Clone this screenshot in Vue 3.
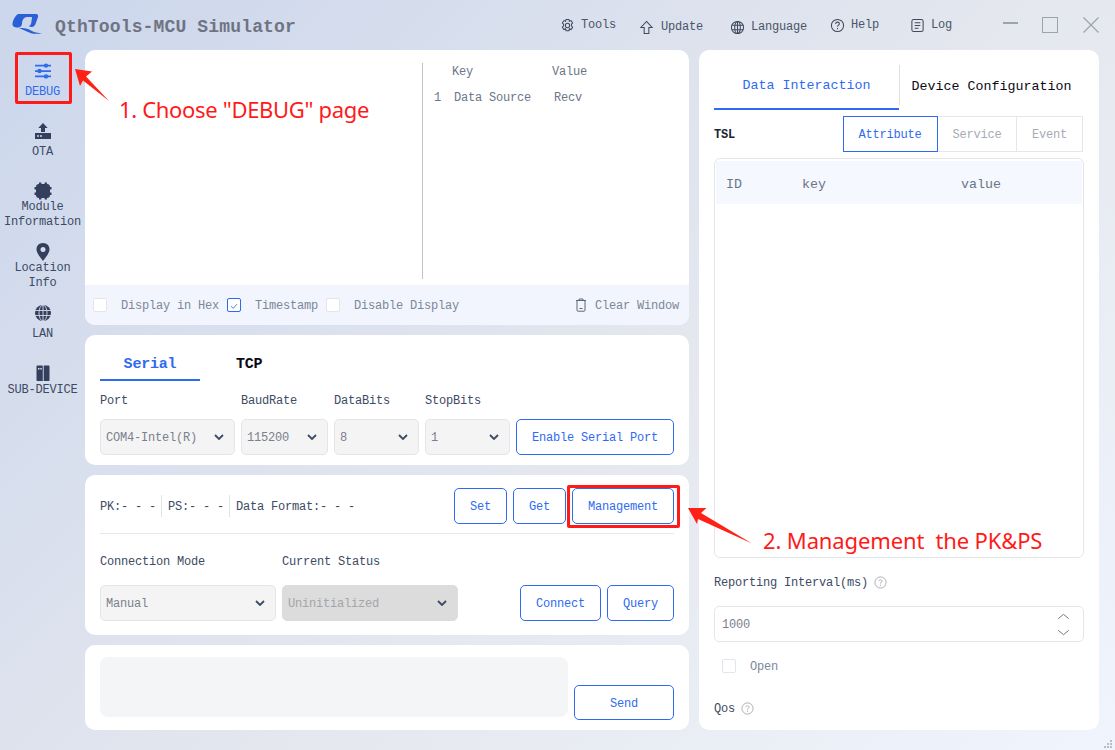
<script setup>
const navItems = [
  { label: 'Tools', icon: 'gear', cls: 'n1' },
  { label: 'Update', icon: 'up', cls: 'n2' },
  { label: 'Language', icon: 'globe', cls: 'n3' },
  { label: 'Help', icon: 'help', cls: 'n4' },
  { label: 'Log', icon: 'log', cls: 'n5' },
]
</script>

<template>
  <div class="window">
    <header class="topbar">
      <svg class="logo" viewBox="0 0 30 20" width="30" height="20">
        <path fill="#2a5fd6" d="M6 0H24C26 0 26.500 1.500 26 3L23.500 10C22.500 13 20 13.500 17 12.500L19 10 20 4C20 3.200 19.500 3 19 3H15C12 3 10 6 10 10 9.500 12 8.500 13.500 6 13.500 2 13.500 0 12 .5 9.500 1 6 3 2 6 0Z"/>
        <path fill="#2a5fd6" d="M7 14C12 14 16 14.500 19 16.500 22 18.500 26 19 30 19 25 20.500 20 20 16 18 13 16.500 10 15.500 7 14Z"/>
      </svg>
      <div class="title">QthTools-MCU Simulator</div>
      <nav class="nav">
        <div v-for="n in navItems" :key="n.label" class="nav-item" :class="n.cls">
          <svg viewBox="0 0 16 16" width="15" height="15" fill="none" stroke="#3f4a5c" stroke-width="1.100">
            <template v-if="n.icon === 'gear'">
              <path d="M6.500 1.500h3l.5 2 1.800-.8 1.700 2.500-1.300 1.500v1.600l1.300 1.500-1.700 2.500-1.800-.8-.5 2h-3l-.5-2-1.800.8-1.700-2.500 1.300-1.500V6.700L2.500 5.200l1.700-2.500 1.800.8Z"/>
              <circle cx="8" cy="8" r="2.300"/>
            </template>
            <path v-else-if="n.icon === 'up'" d="M8 1.500l6 6.500h-3.500v6.500h-5V8H2Z"/>
            <template v-else-if="n.icon === 'globe'">
              <circle cx="8" cy="8" r="6.500"/>
              <ellipse cx="8" cy="8" rx="3" ry="6.500"/>
              <path d="M8 1.500v13M2 5.500h12M2 10.500h12"/>
            </template>
            <template v-else-if="n.icon === 'help'">
              <circle cx="8" cy="8" r="6.500"/>
              <path d="M6 6.300c0-1.200 1-1.900 2-1.900s2 .7 2 1.800c0 1.500-2 1.500-2 3.200M8 10.700v1.300"/>
            </template>
            <template v-else>
              <rect x="2" y="1.500" width="12" height="13" rx="2"/>
              <path d="M5 5h6M5 8h6M5 11h4"/>
            </template>
          </svg>
          <span>{{ n.label }}</span>
        </div>
      </nav>
      <div class="winbtns">
        <span class="win-min"></span>
        <span class="win-max"></span>
        <svg class="win-close" viewBox="0 0 16 16" width="16" height="16"><path d="M.5.500l15 15M15.500.500l-15 15" stroke="#9aa3b0" stroke-width="1.200" fill="none"/></svg>
      </div>
    </header>

    <div class="body">
      <aside class="sidebar">
        <div class="side-item active">
          <svg viewBox="0 0 18 18" width="18" height="18" fill="#2f6bf0">
            <path d="M1 2.800h16v1.700H1ZM1 8.200h16v1.700H1ZM1 13.500h16v1.700H1Z"/>
            <circle cx="12" cy="3.600" r="2.200"/><circle cx="5.500" cy="9" r="2.200"/><circle cx="12" cy="14.400" r="2.200"/>
          </svg>
          <span class="side-label">DEBUG</span>
        </div>
        <div class="side-item">
          <svg viewBox="0 0 18 18" width="18" height="18" fill="#333f5c">
            <path d="M9 1l4.700 5H11v4H7V6H4.300ZM1 11h16v6H1Z"/>
            <rect x="3" y="13.300" width="2" height="1.400" fill="#d5dcea"/><rect x="6" y="13.300" width="2" height="1.400" fill="#d5dcea"/>
          </svg>
          <span class="side-label">OTA</span>
        </div>
        <div class="side-item">
          <svg viewBox="0 0 18 18" width="18" height="18" fill="#333f5c">
            <rect x="2" y="2" width="14" height="14" rx="3"/>
            <path d="M5 .500h2.400v3H5ZM10.600.500H13v3h-2.400ZM5 14.500h2.400v3H5ZM10.600 14.500H13v3h-2.400ZM.5 5h3v2.400h-3ZM.5 10.600h3V13h-3ZM14.500 5h3v2.400h-3ZM14.500 10.600h3V13h-3Z"/>
          </svg>
          <span class="side-label tight">Module<br>Information</span>
        </div>
        <div class="side-item">
          <svg viewBox="0 0 18 18" width="18" height="18">
            <path fill="#333f5c" d="M9 0c3.900 0 6.500 2.800 6.500 6.300 0 4-3.800 8-6.500 11.700C6.300 14.300 2.500 10.300 2.500 6.300 2.500 2.800 5.100 0 9 0Z"/>
            <circle cx="9" cy="6.500" r="2.500" fill="#d5dcea"/>
          </svg>
          <span class="side-label mid">Location<br>Info</span>
        </div>
        <div class="side-item">
          <svg viewBox="0 0 18 18" width="18" height="18">
            <circle cx="9" cy="9" r="8" fill="#333f5c"/>
            <path d="M9 1v16M1 6.500h16M1 11.500h16" stroke="#d5dcea" stroke-width=".9" fill="none"/>
            <ellipse cx="9" cy="9" rx="4" ry="8" fill="none" stroke="#d5dcea" stroke-width=".9"/>
          </svg>
          <span class="side-label">LAN</span>
        </div>
        <div class="side-item">
          <svg viewBox="0 0 18 18" width="18" height="18" fill="#333f5c">
            <path d="M2.500 1.500c0-.6.400-1 1-1h4.300c.6 0 1 .4 1 1V16H3.500c-.6 0-1-.4-1-1ZM9.700.500H14.500c.6 0 1 .4 1 1V15c0 .6-.4 1-1 1H9.700Z"/>
            <rect x="4" y="3" width="1.500" height="1.500" fill="#d5dcea"/><rect x="6.300" y="3" width="1.500" height="1.500" fill="#d5dcea"/>
          </svg>
          <span class="side-label mid">SUB-DEVICE</span>
        </div>
      </aside>

      <main class="center">
        <section class="card log-card">
          <div class="log-area">
            <div class="log-left"></div>
            <div class="kv">
              <div class="kv-head"><span class="k">Key</span><span class="v">Value</span></div>
              <div class="kv-row"><span class="idx">1</span><span class="k2">Data Source</span><span class="v2">Recv</span></div>
            </div>
          </div>
          <div class="log-foot">
            <span class="cb"></span><span class="cb-label l1">Display in Hex</span>
            <span class="cb checked">
              <svg viewBox="0 0 14 14" width="14" height="14"><path d="M3.500 7.200l2.500 2.600 4.500-5" fill="none" stroke="#2f6bf0" stroke-width="1"/></svg>
            </span><span class="cb-label l2">Timestamp</span>
            <span class="cb"></span><span class="cb-label">Disable Display</span>
            <span class="clear">
              <svg viewBox="0 0 12 14" width="12" height="14" fill="none" stroke="#5d6778" stroke-width="1"><path d="M1 2.500h10M4 2.500V1h4v1.500M2 2.500v9.700c0 .6.400 1 1 1h6c.6 0 1-.4 1-1V2.500M4.500 10.500h3"/></svg>
              <span class="clear-text">Clear Window</span>
            </span>
          </div>
        </section>

        <section class="card serial-card">
          <div class="tabs">
            <div class="tab on">Serial</div>
            <div class="tab">TCP</div>
          </div>
          <div class="form-row">
            <div class="field w-port"><label>Port</label><div class="select"><span>COM4-Intel(R)</span><svg class="chev" viewBox="0 0 10 6" width="10" height="6"><path d="M1 1l4 4 4-4" fill="none" stroke="#3c4a63" stroke-width="1.800"/></svg></div></div>
            <div class="field w-baud"><label>BaudRate</label><div class="select"><span>115200</span><svg class="chev" viewBox="0 0 10 6" width="10" height="6"><path d="M1 1l4 4 4-4" fill="none" stroke="#3c4a63" stroke-width="1.800"/></svg></div></div>
            <div class="field w-data"><label>DataBits</label><div class="select"><span>8</span><svg class="chev" viewBox="0 0 10 6" width="10" height="6"><path d="M1 1l4 4 4-4" fill="none" stroke="#3c4a63" stroke-width="1.800"/></svg></div></div>
            <div class="field w-data"><label>StopBits</label><div class="select"><span>1</span><svg class="chev" viewBox="0 0 10 6" width="10" height="6"><path d="M1 1l4 4 4-4" fill="none" stroke="#3c4a63" stroke-width="1.800"/></svg></div></div>
            <button class="btn grow">Enable Serial Port</button>
          </div>
        </section>

        <section class="card mgmt-card">
          <div class="pk-row">
            <span class="pk">PK:- - -</span>
            <span class="pk sep">PS:- - -</span>
            <span class="pk sep">Data Format:- - -</span>
            <div class="pk-btns">
              <button class="btn b-set">Set</button>
              <button class="btn b-set">Get</button>
              <button class="btn b-mgmt">Management</button>
            </div>
          </div>
          <div class="conn">
            <div class="field w-mode"><label>Connection Mode</label><div class="select"><span>Manual</span><svg class="chev" viewBox="0 0 10 6" width="10" height="6"><path d="M1 1l4 4 4-4" fill="none" stroke="#3c4a63" stroke-width="1.800"/></svg></div></div>
            <div class="field w-mode"><label>Current Status</label><div class="select off"><span>Uninitialized</span><svg class="chev" viewBox="0 0 10 6" width="10" height="6"><path d="M1 1l4 4 4-4" fill="none" stroke="#3c4a63" stroke-width="1.800"/></svg></div></div>
            <div class="conn-btns">
              <button class="btn b-conn">Connect</button>
              <button class="btn b-query">Query</button>
            </div>
          </div>
        </section>

        <section class="card send-card">
          <div class="send-box"></div>
          <button class="btn b-send">Send</button>
        </section>
      </main>

      <aside class="card right">
        <div class="r-tabs">
          <div class="r-tab on">Data Interaction</div>
          <div class="r-tab">Device Configuration</div>
        </div>
        <div class="tsl-row">
          <span class="tsl">TSL</span>
          <div class="seg">
            <span class="seg-item s1 on">Attribute</span>
            <span class="seg-item s2">Service</span>
            <span class="seg-item s3">Event</span>
          </div>
        </div>
        <div class="tbl">
          <div class="tbl-head"><span class="c1">ID</span><span class="c2">key</span><span>value</span></div>
        </div>
        <div class="rep-label">Reporting Interval(ms)
          <svg viewBox="0 0 14 14" width="13" height="13" fill="none" stroke="#a5a9b0" stroke-width="1"><circle cx="7" cy="7" r="6"/><path d="M5.300 5.500c0-1 .8-1.500 1.700-1.500s1.700.6 1.700 1.500c0 1.200-1.700 1.300-1.700 2.700M7 9.400v1.200"/></svg>
        </div>
        <div class="num">
          <span class="num-val">1000</span>
          <span class="spin">
            <svg viewBox="0 0 14 8" width="13" height="7"><path d="M1 6.500l6-5 6 5" fill="none" stroke="#5d6778" stroke-width="1"/></svg>
            <svg viewBox="0 0 14 8" width="13" height="7"><path d="M1 1.500l6 5 6-5" fill="none" stroke="#5d6778" stroke-width="1"/></svg>
          </span>
        </div>
        <div class="open-row"><span class="cb"></span><span class="cb-label">Open</span></div>
        <div class="qos">Qos
          <svg viewBox="0 0 14 14" width="13" height="13" fill="none" stroke="#a5a9b0" stroke-width="1"><circle cx="7" cy="7" r="6"/><path d="M5.300 5.500c0-1 .8-1.500 1.700-1.500s1.700.6 1.700 1.500c0 1.200-1.700 1.300-1.700 2.700M7 9.400v1.200"/></svg>
        </div>
      </aside>
    </div>

    <!-- Annotations over the screenshot -->
    <div class="mark mark-debug"></div>
    <div class="mark mark-mgmt"></div>
    <div class="note note1">1. Choose "DEBUG" page</div>
    <div class="note note2">2. Management&nbsp; the PK&amp;PS</div>
    <svg class="arrows" viewBox="0 0 1115 750" width="1115" height="750">
      <polygon fill="#ff2116" points="75,69 92,71.500 86,76.500 109,101 83,80.500 80,86"/>
      <polygon fill="#ff2116" points="688,508 706.500,508 701,513 752,543.500 698,519 697,524"/>
    </svg>
    <svg class="grip" viewBox="0 0 10 10" width="10" height="10" fill="#b8bec8">
      <rect x="7" y="1" width="2" height="2"/><rect x="4" y="4" width="2" height="2"/><rect x="7" y="4" width="2" height="2"/><rect x="1" y="7" width="2" height="2"/><rect x="4" y="7" width="2" height="2"/><rect x="7" y="7" width="2" height="2"/>
    </svg>
  </div>
</template>

<style>
html, body { margin: 0; padding: 0; }
</style>

<style scoped>
* { box-sizing: border-box; }
.window {
  position: relative;
  width: 1115px;
  height: 750px;
  overflow: hidden;
  background: linear-gradient(135deg, #cbd6ec 0%, #e4e7ee 55%, #f0f4fc 100%);
  font-family: "Liberation Mono", "Noto Sans CJK SC", monospace;
  font-size: 12px;
  letter-spacing: -0.2px;
  color: #3c4a63;
}
.topbar { height: 50px; display: flex; align-items: center; }
.logo { margin-left: 12px; margin-top: -2px; flex: none; }
.title { margin-left: 13px; margin-top: 3px; font-size: 18px; font-weight: 700; color: #6f7482; letter-spacing: 0.15px; }
.nav { flex: 1; height: 100%; display: flex; align-items: center; margin-left: 264px; }
.nav-item { display: flex; align-items: center; gap: 6px; color: #4a5568; }
.n1 { width: 79px; }
.n2 { width: 91px; margin-top: 4px; gap: 7px; }
.n3 { width: 100px; margin-top: 4px; }
.n4 { width: 80px; }
.n5 { width: 50px; }
.winbtns { display: flex; align-items: center; width: 130px; padding-left: 18px; }
.win-min { width: 15px; height: 1.500px; background: #9aa3b0; margin-right: 24px; margin-top: -4px; }
.win-max { width: 16px; height: 16px; border: 1.500px solid #9aa3b0; margin-right: 25px; }
.win-close { flex: none; }

.body { display: flex; height: 680px; }
.sidebar {
  width: 85px;
  padding-top: 12px;
  display: grid;
  grid-template-rows: 60px 60px 61px 61px 61px 40px;
  justify-items: center;
  align-content: start;
  text-align: center;
}
.side-item { display: flex; flex-direction: column; align-items: center; width: 85px; }
.side-label { margin-top: 5px; line-height: 15px; white-space: nowrap; color: #3c4a63; }
.side-label.tight { margin-top: 0; }
.side-label.mid { margin-top: 0; }
.active .side-label { color: #2f6bf0; }

.center { width: 604px; display: flex; flex-direction: column; gap: 10px; }
.card { background: #fff; border-radius: 10px; }
.log-card { height: 275px; display: flex; flex-direction: column; overflow: hidden; }
.log-area { flex: 1; display: flex; padding: 13px 0 6px; }
.log-left { width: 337px; }
.kv { flex: 1; border-left: 1px solid #bfc2c7; color: #6b7688; }
.kv-head { display: flex; padding: 2px 0 0 29px; line-height: 15px; }
.k { width: 100px; }
.kv-row { display: flex; margin-top: 11px; line-height: 15px; padding-left: 11px; }
.idx { width: 20px; }
.k2 { width: 100px; }
.cb-label { color: #7c879a; padding-top: 2px; }
.log-foot { height: 40px; background: #f2f5fd; display: flex; align-items: center; padding: 0 10px 0 8px; }
.cb { width: 14px; height: 14px; background: #fff; border: 1px solid #e3e5ea; border-radius: 2px; flex: none; display: inline-flex; }
.cb.checked { border-color: #2f6bf0; }
.log-foot .cb-label { margin-left: 14px; }
.l1 { margin-right: 8px; }
.l2 { margin-right: 8px; }
.clear { margin-left: auto; display: flex; align-items: center; gap: 8px; color: #7c879a; }
.clear-text { padding-top: 2px; }

.serial-card { height: 130px; padding: 0 15px; }
.tabs { display: flex; height: 46px; }
.tab { width: 136px; font-size: 15px; font-weight: 700; color: #0a0a14; padding-top: 21px; }
.tab.on { width: 100px; margin-right: 36px; color: #2f6bf0; text-align: center; border-bottom: 2px solid #2f6bf0; }
.form-row { display: flex; gap: 6px; align-items: flex-end; margin-top: 13px; }
.field label { display: block; line-height: 15px; margin-bottom: 10px; }
.select {
  height: 36px;
  background: #f4f4f5;
  border: 1px solid #e4e5e8;
  border-radius: 5px;
  display: flex;
  align-items: center;
  justify-content: space-between;
  padding: 0 10px 0 5px;
  color: #7a808c;
}
.select span { padding-top: 2px; }
.select.off { background: #dcdcdc; color: #a3a5a9; border-color: #dcdcdc; }
.w-port { width: 135px; }
.w-baud { width: 87px; }
.w-data { width: 85px; }
.btn {
  height: 36px;
  background: #fff;
  border: 1px solid #2f6bf0;
  border-radius: 5px;
  color: #2f6bf0;
  font: inherit;
  letter-spacing: inherit;
  padding: 2px 0 0;
  cursor: pointer;
}
.grow { flex: 1; }

.mgmt-card { height: 160px; padding: 13px 15px 0; }
.pk-row { display: flex; align-items: center; height: 46px; padding-bottom: 10px; border-bottom: 1px solid #e7e8ea; }
.pk { white-space: nowrap; line-height: 20px; padding: 2px 5px 0 0; }
.sep { border-left: 1px solid #e2e3e6; padding-left: 6px; }
.pk-btns { margin-left: auto; display: flex; gap: 6px; }
.b-set { width: 53px; }
.b-mgmt { width: 102px; }
.conn { display: flex; gap: 6px; align-items: flex-end; margin-top: 21px; }
.conn label { margin-bottom: 15px; }
.w-mode { width: 176px; }
.conn-btns { margin-left: auto; display: flex; gap: 6px; }
.b-conn { width: 81px; }
.b-query { width: 67px; }

.send-card { height: 85px; padding: 12px 15px 0; display: flex; gap: 6px; }
.send-box { width: 468px; height: 60px; background: #f4f5f7; border-radius: 8px; }
.b-send { width: 100px; height: 35px; margin-top: 28px; }

.right { width: 400px; margin-left: 10px; height: 680px; padding: 15px 15px 0; overflow: hidden; }
.r-tabs { display: flex; height: 45px; font-size: 13.300px; letter-spacing: .02px; }
.r-tab { flex: 1; display: flex; align-items: center; justify-content: center; padding-bottom: 2px; color: #0a0a14; position: relative; }
.r-tab.on { width: 185px; flex: none; color: #2f6bf0; border-bottom: 2px solid #2f6bf0; }
.r-tab.on::after { content: ""; position: absolute; right: -1px; top: 0; height: 40px; width: 1px; background: #dfe0e3; }
.tsl-row { display: flex; align-items: center; justify-content: space-between; margin-top: 6px; height: 36px; }
.tsl { font-weight: 700; color: #1c2434; padding-top: 2px; }
.seg { display: flex; height: 36px; margin-right: 1px; border: 1px solid #e5e6e9; border-left: none; }
.seg-item { display: flex; align-items: center; justify-content: center; color: #a7abb3; border-right: 1px solid #e5e6e9; padding-top: 2px; }
.seg-item:last-child { border-right: none; }
.s1 { width: 95px; color: #2f6bf0; outline: 1px solid #2f6bf0; outline-offset: -1px; height: 36px; margin-top: -1px; }
.s2 { width: 79px; }
.s3 { width: 65px; }
.tbl { margin-top: 6px; height: 400px; border: 1px solid #e5e6e9; border-radius: 6px; padding: 2px 1px; }
.tbl-head { height: 43px; background: #f5f8fe; display: flex; align-items: center; padding: 3px 0 0 10px; font-size: 13.300px; letter-spacing: .02px; color: #6b7688; }
.c1 { width: 76px; }
.c2 { width: 159px; }
.rep-label { margin-top: 16px; display: flex; align-items: center; gap: 6px; height: 16px; padding-top: 1px; }
.num { margin-top: 16px; height: 36px; border: 1px solid #e5e6e9; border-radius: 5px; display: flex; align-items: center; justify-content: space-between; padding: 0 13px 0 7px; color: #7a808c; }
.num-val { padding-top: 2px; }
.spin { display: flex; flex-direction: column; gap: 9px; }
.open-row { display: flex; align-items: center; gap: 14px; padding-left: 8px; margin-top: 16px; }
.qos { margin-top: 26px; display: flex; align-items: center; gap: 6px; height: 16px; padding-top: 1px; }

.mark { position: absolute; border: 3px solid #ff1a1a; border-radius: 2px; }
.mark-debug { left: 15px; top: 52px; width: 57px; height: 52px; }
.mark-mgmt { left: 567px; top: 485px; width: 113px; height: 43px; }
.note { position: absolute; font-family: "Noto Sans", "Open Sans", sans-serif; font-size: 22px; color: #ff1a1a; white-space: nowrap; line-height: 30px; }
.note1 { left: 119px; top: 94px; letter-spacing: -0.32px; }
.note2 { left: 763px; top: 525px; letter-spacing: -0.13px; }
.arrows { position: absolute; left: 0; top: 0; pointer-events: none; }
.grip { position: absolute; right: 2px; bottom: 1px; }
</style>
